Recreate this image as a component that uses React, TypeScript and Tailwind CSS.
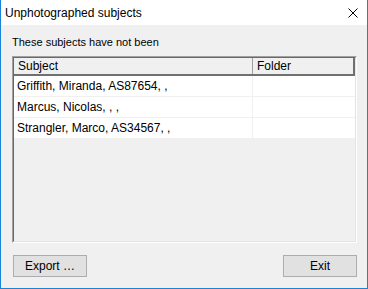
import React from "react";

const rows = [
  "Griffith, Miranda, AS87654, ,",
  "Marcus, Nicolas, , ,",
  "Strangler, Marco, AS34567, ,",
];

export default function App() {
  return (
    <div
      className="w-[368px] h-[289px] flex flex-col border-l border-r border-b border-[#1883d7] bg-[#f0f0f0] text-[12px] text-black"
      style={{ fontFamily: '"Liberation Sans", Arial, sans-serif' }}
    >
      <div className="h-[26px] bg-white flex items-center justify-between pl-[4px] pr-[9px]">
        <span className="leading-[16px]">Unphotographed subjects</span>
        <svg width="10" height="10" viewBox="0 0 10 10">
          <path d="M0.5 0.5 L9.5 9.5 M9.5 0.5 L0.5 9.5" stroke="#000" strokeWidth="1" fill="none" />
        </svg>
      </div>
      <div className="flex-1 flex flex-col pl-[11px] pr-[10px] pt-[10px] pb-[11px]">
        <div className="h-[15px] leading-[15px] text-[11px]">These subjects have not been</div>
        <div className="mt-[6px] h-[187px] border-t border-l border-[#a0a0a0] border-r-white border-b-white border-r border-b">
          <div className="h-full border-t border-l border-[#696969] border-r border-b border-r-[#e3e3e3] border-b-[#e3e3e3] bg-[#f0f0f0]">
            <div className="flex h-[18px] bg-[#f0f0f0] border-b-2 border-r-2 border-[#707070]">
              <div className="w-[238px] pl-[4px] leading-[16px]">Subject</div>
              <div className="w-px bg-[#a0a0a0]" />
              <div className="flex-1 pl-[4px] leading-[16px]">Folder</div>
            </div>
            {rows.map((r) => (
              <div key={r} className="flex h-[21px] bg-white border-b border-[#f0f0f0]">
                <div className="w-[238px] pl-[3px] leading-[20px] whitespace-nowrap">{r}</div>
                <div className="w-px bg-[#f0f0f0]" />
                <div className="flex-1" />
              </div>
            ))}
          </div>
        </div>
        <div className="mt-[12px] flex justify-between pl-[1px]">
          <button className="w-[74px] h-[22px] bg-[#e1e1e1] border border-[#adadad] leading-[20px] text-center">
            Export …
          </button>
          <button className="w-[74px] h-[22px] bg-[#e1e1e1] border border-[#adadad] leading-[20px] text-center">
            Exit
          </button>
        </div>
      </div>
    </div>
  );
}
